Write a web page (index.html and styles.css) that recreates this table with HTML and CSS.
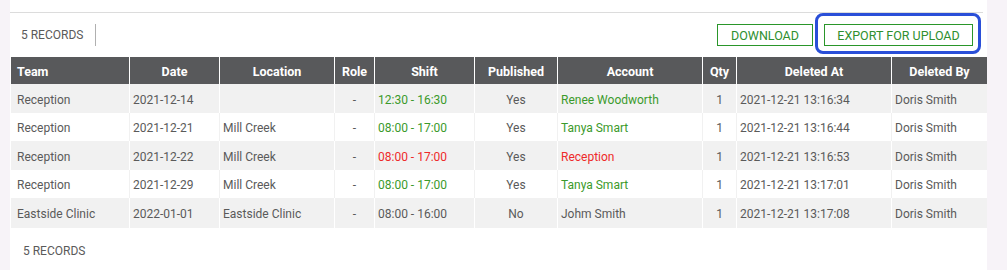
FILE: index.html
```html
<!DOCTYPE html>
<html>
<head>
<meta charset="utf-8">
<link rel="stylesheet" href="styles.css">
</head>
<body>
<div class="panel">
  <div class="topstrip"></div>
  <div class="toolbar">
    <div class="count">5 RECORDS</div>
    <div class="sep"></div>
    <div class="spacer"></div>
    <button class="btn">DOWNLOAD</button>
    <div class="highlight-wrap">
      <button class="btn">EXPORT FOR UPLOAD</button>
      <div class="highlight"></div>
    </div>
  </div>
  <table class="grid">
    <colgroup>
      <col style="width:119px"><col style="width:90px"><col style="width:115px"><col style="width:40px"><col style="width:100px"><col style="width:83px"><col style="width:145px"><col style="width:34px"><col style="width:155px"><col style="width:95px">
    </colgroup>
    <thead>
      <tr>
        <th class="left">Team</th><th>Date</th><th>Location</th><th>Role</th><th>Shift</th><th>Published</th><th>Account</th><th>Qty</th><th>Deleted At</th><th>Deleted By</th>
      </tr>
    </thead>
    <tbody>
      <tr>
        <td>Reception</td><td>2021-12-14</td><td></td><td class="c">-</td><td class="green">12:30 - 16:30</td><td class="c">Yes</td><td class="green">Renee Woodworth</td><td class="c">1</td><td>2021-12-21 13:16:34</td><td>Doris Smith</td>
      </tr>
      <tr>
        <td>Reception</td><td>2021-12-21</td><td>Mill Creek</td><td class="c">-</td><td class="green">08:00 - 17:00</td><td class="c">Yes</td><td class="green">Tanya Smart</td><td class="c">1</td><td>2021-12-21 13:16:44</td><td>Doris Smith</td>
      </tr>
      <tr>
        <td>Reception</td><td>2021-12-22</td><td>Mill Creek</td><td class="c">-</td><td class="red">08:00 - 17:00</td><td class="c">Yes</td><td class="red">Reception</td><td class="c">1</td><td>2021-12-21 13:16:53</td><td>Doris Smith</td>
      </tr>
      <tr>
        <td>Reception</td><td>2021-12-29</td><td>Mill Creek</td><td class="c">-</td><td class="green">08:00 - 17:00</td><td class="c">Yes</td><td class="green">Tanya Smart</td><td class="c">1</td><td>2021-12-21 13:17:01</td><td>Doris Smith</td>
      </tr>
      <tr>
        <td>Eastside Clinic</td><td>2022-01-01</td><td>Eastside Clinic</td><td class="c">-</td><td>08:00 - 16:00</td><td class="c">No</td><td>Johm Smith</td><td class="c">1</td><td>2021-12-21 13:17:08</td><td>Doris Smith</td>
      </tr>
    </tbody>
  </table>
  <div class="footer">5 RECORDS</div>
</div>
</body>
</html>
```
FILE: styles.css
```css
html, body {
  margin: 0;
  padding: 0;
  background: #f7f3f8;
  height: 100%;
}
body {
  font-family: "Roboto", "Liberation Sans", sans-serif;
  font-size: 12px;
  color: #5a5a5a;
  padding-left: 10px;
  width: 977px;
}
.panel {
  background: #fff;
  height: 270px;
}
.topstrip {
  height: 12px;
  border-bottom: 1px solid #dcdcdc;
  margin-right: 4px;
}
.toolbar {
  display: flex;
  align-items: center;
  height: 44px;
  padding: 0 14px 0 11px;
}
.count {
  font-size: 12px;
  color: #5a5a5a;
}
.sep {
  width: 1px;
  height: 22px;
  background: #b0b0b0;
  margin-left: 12px;
}
.spacer { flex: 1; }
.btn {
  font-family: inherit;
  font-size: 12.5px;
  color: #2f8f2f;
  background: #fff;
  border: 1px solid #2a962a;
  height: 22px;
  padding: 0;
  margin: 0;
  cursor: pointer;
}
.btn:first-of-type { width: 96px; }
.highlight-wrap {
  position: relative;
  margin-left: 11px;
}
.highlight-wrap .btn { width: 149px; }
.highlight {
  position: absolute;
  left: -9px;
  right: -8px;
  top: -11px;
  bottom: -8px;
  border: 3px solid #2a4fd8;
  border-radius: 8px;
  pointer-events: none;
}
.grid {
  table-layout: fixed;
  border-collapse: separate;
  border-spacing: 0;
  width: 976px;
  margin-left: 1px;
}
.grid thead tr { height: 27px; }
.grid th {
  background: #58595b;
  color: #fff;
  font-weight: bold;
  font-size: 12.5px;
  padding: 1px 3px 0;
  text-align: center;
  border-right: 1px solid #fff;
  white-space: nowrap;
}
.grid th.left { text-align: left; padding-left: 6px; }
.grid th:last-child, .grid td:last-child { border-right: none; }
.grid tbody tr { height: 29px; }
.grid tbody tr:nth-child(even) { height: 28px; }
.grid tbody tr:last-child { height: 30px; }
.grid td {
  padding: 2px 3px 0;
  border-right: 1px solid #fff;
  white-space: nowrap;
  overflow: hidden;
}
.grid td:first-child { padding-left: 6px; }
.grid tbody tr:nth-child(odd) td { background: #f1f1f1; }
.grid tbody tr:nth-child(even) td { background: #fff; border-right-color: #f1f1f1; }
.grid td.c { text-align: center; }
.green { color: #3b9a2b; }
.red { color: #ee2a2a; }
.footer {
  font-size: 12px;
  padding: 16px 0 0 13px;
}
```
